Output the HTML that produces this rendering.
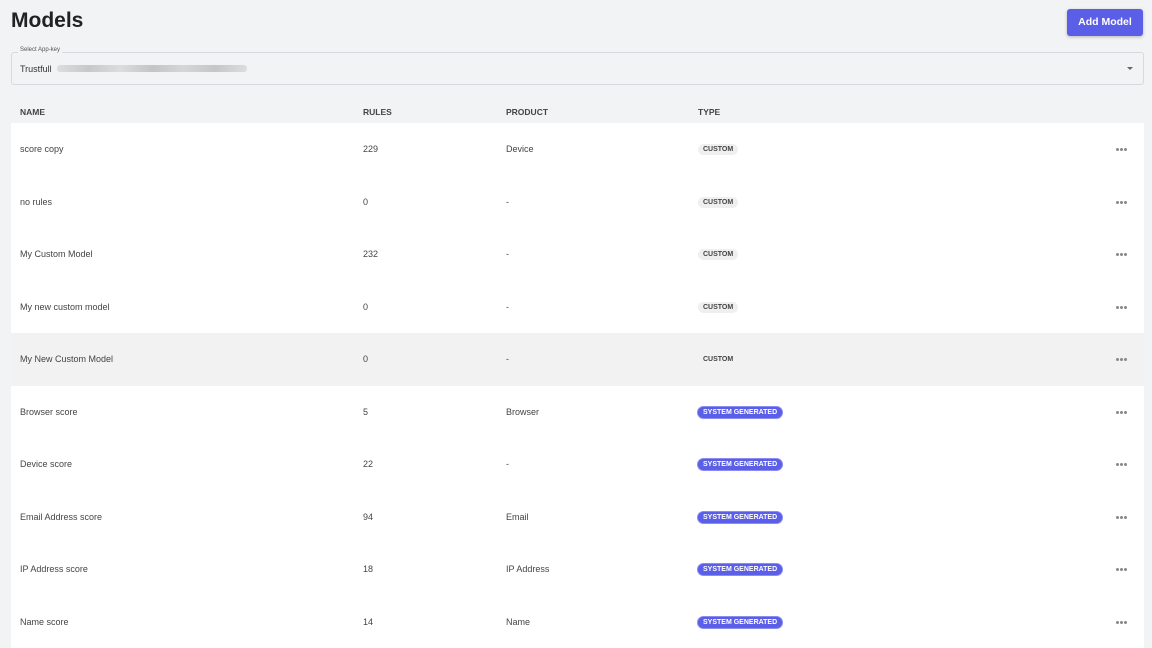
<!DOCTYPE html><html><head><style>
body{margin:0;width:1152px;height:648px;background:#f2f3f5;font-family:"Liberation Sans",sans-serif;overflow:hidden;position:relative;color:#333}
h1{position:absolute;left:11px;top:9px;margin:0;font-size:21px;font-weight:600;color:#222}
.btn{position:absolute;left:1067px;top:9px;width:76px;height:27px;background:#5b5ee6;color:#fff;border-radius:3px;font-size:10.5px;font-weight:bold;text-align:center;line-height:27px;box-shadow:0 1px 3px rgba(0,0,0,.25)}
.sel{position:absolute;left:11px;top:52px;width:1131px;height:31px;border:1px solid #d8d9dc;border-radius:3px}
.lbl{position:absolute;left:6px;top:-6px;font-size:6px;background:#f2f3f5;padding:0 2px;color:#555}
.val{position:absolute;left:8px;top:11px;font-size:9px;color:#333}
.blur{position:absolute;left:45px;top:12px;width:190px;height:7px;background:linear-gradient(90deg,#ddd,#c8c8c8,#ddd,#c4c4c4,#d6d6d6,#c6c6c6,#ddd);border-radius:3px}
.arr{position:absolute;right:10px;top:14px;border:3px solid transparent;border-top:3px solid #666}
.hd{position:absolute;top:107px;font-size:8.5px;font-weight:bold;color:#444}
.tbl{position:absolute;left:11px;top:123px;width:1133px;height:525px;background:#fff}
.row{position:absolute;left:0;width:1133px;height:52.5px;font-size:9px;color:#444}
.row span{position:absolute;top:21px}
.tag{position:absolute;top:21px;left:687px;font-size:7px;font-weight:bold;padding:2px 5px;border-radius:8px;background:#efefef;color:#444}
.sys{background:#5b5ee6;color:#fff;box-shadow:0 0 0 1px #8a8cf0;padding:2px 5px}
.dots{position:absolute;left:1105px;top:25px;width:3px;height:3px;border-radius:50%;background:#888;box-shadow:4px 0 #888,8px 0 #888}
</style></head><body>
<h1>Models</h1>
<div class="btn">Add Model</div>
<div class="sel"><div class="lbl">Select App-key</div><div class="val">Trustfull</div><div class="blur"></div><div class="arr"></div></div>
<div class="hd" style="left:20px">NAME</div><div class="hd" style="left:363px">RULES</div><div class="hd" style="left:506px">PRODUCT</div><div class="hd" style="left:698px">TYPE</div>
<div class="tbl">
<div class="row" style="top:0"><span style="left:9px">score copy</span><span style="left:352px">229</span><span style="left:495px">Device</span><div class="tag">CUSTOM</div><div class="dots"></div></div>
<div class="row" style="top:52.5px"><span style="left:9px">no rules</span><span style="left:352px">0</span><span style="left:495px">-</span><div class="tag">CUSTOM</div><div class="dots"></div></div>
<div class="row" style="top:105px"><span style="left:9px">My Custom Model</span><span style="left:352px">232</span><span style="left:495px">-</span><div class="tag">CUSTOM</div><div class="dots"></div></div>
<div class="row" style="top:157.5px"><span style="left:9px">My new custom model</span><span style="left:352px">0</span><span style="left:495px">-</span><div class="tag">CUSTOM</div><div class="dots"></div></div>
<div class="row" style="top:210px;background:#f2f2f2"><span style="left:9px">My New Custom Model</span><span style="left:352px">0</span><span style="left:495px">-</span><div class="tag" style="background:none">CUSTOM</div><div class="dots"></div></div>
<div class="row" style="top:262.5px"><span style="left:9px">Browser score</span><span style="left:352px">5</span><span style="left:495px">Browser</span><div class="tag sys">SYSTEM GENERATED</div><div class="dots"></div></div>
<div class="row" style="top:315px"><span style="left:9px">Device score</span><span style="left:352px">22</span><span style="left:495px">-</span><div class="tag sys">SYSTEM GENERATED</div><div class="dots"></div></div>
<div class="row" style="top:367.5px"><span style="left:9px">Email Address score</span><span style="left:352px">94</span><span style="left:495px">Email</span><div class="tag sys">SYSTEM GENERATED</div><div class="dots"></div></div>
<div class="row" style="top:420px"><span style="left:9px">IP Address score</span><span style="left:352px">18</span><span style="left:495px">IP Address</span><div class="tag sys">SYSTEM GENERATED</div><div class="dots"></div></div>
<div class="row" style="top:472.5px"><span style="left:9px">Name score</span><span style="left:352px">14</span><span style="left:495px">Name</span><div class="tag sys">SYSTEM GENERATED</div><div class="dots"></div></div>
</div>
</body></html>
